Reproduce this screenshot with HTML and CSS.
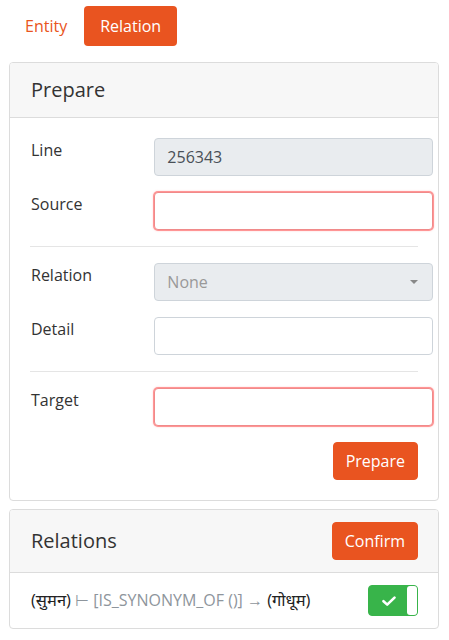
FILE: index.html
```html
<!DOCTYPE html>
<html lang="en">
<head>
<meta charset="utf-8">
<title>Relations</title>
<link rel="stylesheet" href="styles.css">
</head>
<body>
<div class="page">
  <nav class="tabs">
    <a class="tab">Entity</a>
    <a class="tab active">Relation</a>
  </nav>

  <section class="card">
    <header class="card-header">
      <h5 class="card-title">Prepare</h5>
    </header>
    <div class="card-body">
      <div class="form-row">
        <label class="label">Line</label>
        <input class="control disabled" value="256343" disabled>
      </div>
      <div class="form-row">
        <label class="label">Source</label>
        <input class="control invalid">
      </div>
      <hr class="divider">
      <div class="form-row">
        <label class="label">Relation</label>
        <div class="control disabled select">
          <span class="placeholder">None</span>
          <span class="caret"></span>
        </div>
      </div>
      <div class="form-row">
        <label class="label">Detail</label>
        <input class="control">
      </div>
      <hr class="divider">
      <div class="form-row">
        <label class="label">Target</label>
        <input class="control invalid">
      </div>
      <div class="actions">
        <button class="btn">Prepare</button>
      </div>
    </div>
  </section>

  <section class="card">
    <header class="card-header split">
      <h5 class="card-title">Relations</h5>
      <button class="btn">Confirm</button>
    </header>
    <div class="list-item">
      <span class="rel"><span class="node">(सुमन)</span> <span class="muted">⊢ [IS_SYNONYM_OF ()] →</span> <span class="node">(गोधूम)</span></span>
      <span class="toggle">
        <svg class="check" viewBox="0 0 14 10" width="14" height="10"><path d="M1.5 5.2 L5.2 8.6 L12.5 1.6" fill="none" stroke="#fff" stroke-width="2.6" stroke-linecap="round" stroke-linejoin="round"/></svg>
        <span class="knob"></span>
      </span>
    </div>
  </section>
</div>
</body>
</html>
```

FILE: styles.css
```css
* { box-sizing: border-box; }

html, body {
  margin: 0;
  padding: 0;
  background: #fff;
}

body {
  font-family: "Open Sans", "Noto Sans", "Noto Sans Devanagari", sans-serif;
  font-size: 16px;
  line-height: 1.5;
  color: #333;
}

.page {
  padding: 6px 10px 0 9px;
}

.tabs {
  display: flex;
  margin-bottom: 16px;
}

.tab {
  display: block;
  padding: 8px 16px;
  color: #e95420;
  border-radius: 4px;
  text-decoration: none;
}

.tab.active {
  background: #e95420;
  color: #fff;
  margin-left: 1px;
}

.card {
  border: 1px solid #dcdcdc;
  border-radius: 4px;
  margin-bottom: 8px;
  background: #fff;
  overflow: hidden;
}

.card-header {
  background: #f7f7f7;
  border-bottom: 1px solid #dcdcdc;
  padding: 12px 20px 12px 21px;
  min-height: 55px;
  display: flex;
  align-items: center;
}

.card-header.split {
  justify-content: space-between;
  min-height: 63px;
  padding-right: 20px;
}

.card-title {
  margin: 0;
  font-size: 20px;
  font-weight: 400;
  line-height: 30px;
  color: #333;
}

.card-body {
  padding: 20px;
}

.form-row {
  display: flex;
  margin: 0 -15px 16px -15px;
}

.label {
  width: 33.333%;
  padding: 0 15px 0 16px;
  flex: none;
}

.control {
  width: 66.667%;
  flex: none;
  height: 38px;
  padding: 6px 12px;
  font: inherit;
  color: #495057;
  background: #fff;
  border: 1px solid #ced4da;
  border-radius: 4px;
  outline: none;
}

.control.disabled {
  background: #e9ecef;
  opacity: 1;
}

.control.invalid {
  border-color: #f08a8a;
  box-shadow: 0 0 0 1px rgba(255, 90, 90, 0.55), 0 0 2px 1px rgba(255, 120, 120, 0.35);
}

.select {
  display: flex;
  align-items: center;
  justify-content: space-between;
  padding-right: 14px;
}

.placeholder {
  color: #999;
}

.caret {
  width: 0;
  height: 0;
  border-left: 4px solid transparent;
  border-right: 4px solid transparent;
  border-top: 4px solid #888;
}

.divider {
  border: 0;
  border-top: 1px solid #e5e5e5;
  margin: 0 0 16px;
}

.actions {
  display: flex;
  justify-content: flex-end;
}

.btn {
  font: inherit;
  color: #fff;
  background: #e95420;
  border: 1px solid #e95420;
  border-radius: 4px;
  padding: 6px 12px;
  height: 38px;
  line-height: 24px;
}

.list-item {
  display: flex;
  align-items: center;
  justify-content: space-between;
  padding: 12px 20px 12px 21px;
}

.rel {
  color: #222;
  font-size: 16px;
}

.node {
  font-size: 16.5px;
}

.muted {
  color: #8e959c;
}

.toggle {
  position: relative;
  width: 50px;
  height: 31px;
  background: #38b44a;
  border: 1px solid #38b44a;
  border-radius: 4px;
  display: flex;
  align-items: center;
  padding-left: 13px;
}

.check {
  display: block;
}

.knob {
  position: absolute;
  right: 0;
  top: 0;
  bottom: 0;
  width: 10px;
  background: #fff;
  border-radius: 3px;
}
```
